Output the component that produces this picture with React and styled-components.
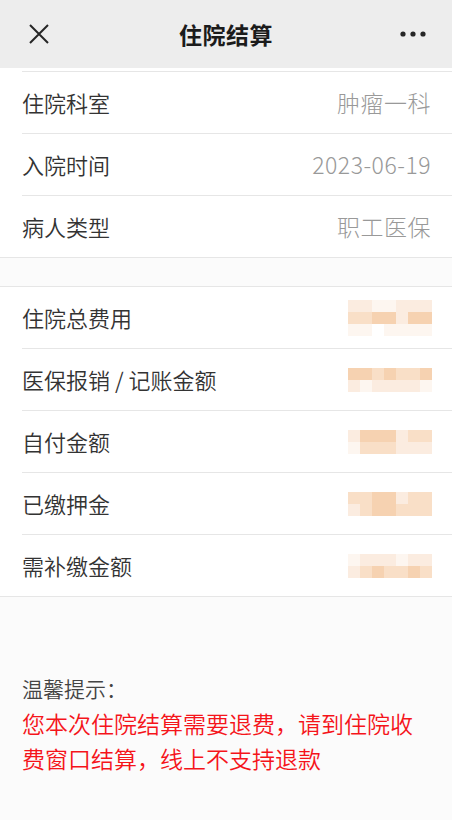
import React from "react"
import styled, { createGlobalStyle } from "styled-components"

const GlobalStyle = createGlobalStyle`
  body {
    margin: 0;
    background: #fbfbfb;
    font-family: "Noto Sans CJK SC", "Noto Sans", sans-serif;
  }
`

const Page = styled.div`
  min-height: 100vh;
  background: #fbfbfb;
`

const Header = styled.header`
  height: 68px;
  background: #ededed;
  display: grid;
  grid-template-columns: 80px 1fr 80px;
  align-items: center;
`

const IconButton = styled.div`
  display: flex;
  align-items: center;
  justify-content: ${(p) => (p.$right ? "flex-end" : "flex-start")};
  padding: ${(p) => (p.$right ? "0 26px 0 0" : "0 0 0 28px")};
  height: 100%;
`

const Title = styled.h1`
  margin: 0;
  text-align: center;
  font-size: 23px;
  font-weight: 600;
  color: #1b1b1b;
  letter-spacing: 0.5px;
`

const Group = styled.section`
  background: #fff;
  border-top: ${(p) => (p.$clipped ? "none" : "1px solid #e6e6e6")};
  border-bottom: 1px solid #e6e6e6;
  margin-top: ${(p) => (p.$clipped ? "0" : "28px")};
  padding-top: ${(p) => (p.$clipped ? "3px" : "0")};
`

const Row = styled.div`
  height: 61px;
  margin-left: 22px;
  padding-right: 22px;
  display: flex;
  align-items: center;
  justify-content: space-between;
  border-top: ${(p) => (p.$first ? "none" : "1px solid #e6e6e6")};
`

const Edge = styled.div`
  margin-left: 22px;
  border-bottom: 1px solid #e6e6e6;
`

const Label = styled.span`
  font-size: 22px;
  font-weight: 350;
  color: #333;
  margin-top: -2px;
`

const Value = styled.span`
  font-size: 23px;
  font-weight: 300;
  letter-spacing: 0.5px;
  margin-right: -1px;
  margin-top: -2px;
  color: #999;
`

const Mosaic = styled.div`
  display: grid;
  grid-template-columns: repeat(7, 12px);
  grid-auto-rows: 12px;
  margin-right: -2px;
`

const Cell = styled.span`
  display: block;
`

const Notice = styled.div`
  padding: 74px 22px 0;
`

const NoticeTitle = styled.div`
  font-size: 21px;
  font-weight: 350;
  color: #444;
  line-height: 35px;
`

const NoticeText = styled.div`
  font-size: 23px;
  font-weight: 350;
  color: #f5141a;
  line-height: 35px;
`

const A = "#f6d2b1"
const B = "#f9dfc7"
const C = "#fbece0"
const D = "#fdf6f0"

const info = [
  ["住院科室", "肿瘤一科"],
  ["入院时间", "2023-06-19"],
  ["病人类型", "职工医保"],
]

const costs = [
  ["住院总费用", [[C, C, D, D, C, C, C], [B, B, A, A, C, A, A], [D, D, "#fff", D, D, D, D]]],
  ["医保报销 / 记账金额", [[A, A, B, A, B, B, A], [C, D, C, C, C, C, D]]],
  ["自付金额", [[C, A, A, A, C, B, B], [D, B, B, B, C, C, C]]],
  ["已缴押金", [[B, B, A, A, C, B, B], [C, B, A, A, B, B, B]]],
  ["需补缴金额", [[D, C, C, C, D, C, C], [C, B, A, B, B, A, B]]],
]

function Blur({ rows }) {
  return (
    <Mosaic>
      {rows.flat().map((c, i) => (
        <Cell key={i} style={{ background: c }} />
      ))}
    </Mosaic>
  )
}

function Settlement() {
  return (
    <Page>
      <GlobalStyle />
      <Header>
        <IconButton>
          <svg width="22" height="22" viewBox="0 0 22 22">
            <path d="M2 2 L20 20 M20 2 L2 20" stroke="#262626" strokeWidth="2" fill="none" />
          </svg>
        </IconButton>
        <Title>住院结算</Title>
        <IconButton $right>
          <svg width="26" height="6" viewBox="0 0 26 6">
            <circle cx="3" cy="3" r="2.6" fill="#262626" />
            <circle cx="13" cy="3" r="2.6" fill="#262626" />
            <circle cx="23" cy="3" r="2.6" fill="#262626" />
          </svg>
        </IconButton>
      </Header>

      <Group $clipped>
        <Edge />
        {info.map(([k, v], i) => (
          <Row key={k} $first={i === 0}>
            <Label>{k}</Label>
            <Value>{v}</Value>
          </Row>
        ))}
      </Group>

      <Group>
        {costs.map(([k, rows], i) => (
          <Row key={k} $first={i === 0}>
            <Label>{k}</Label>
            <Blur rows={rows} />
          </Row>
        ))}
      </Group>

      <Notice>
        <NoticeTitle>温馨提示：</NoticeTitle>
        <NoticeText>您本次住院结算需要退费，请到住院收费窗口结算，线上不支持退款</NoticeText>
      </Notice>
    </Page>
  )
}

export default Settlement
